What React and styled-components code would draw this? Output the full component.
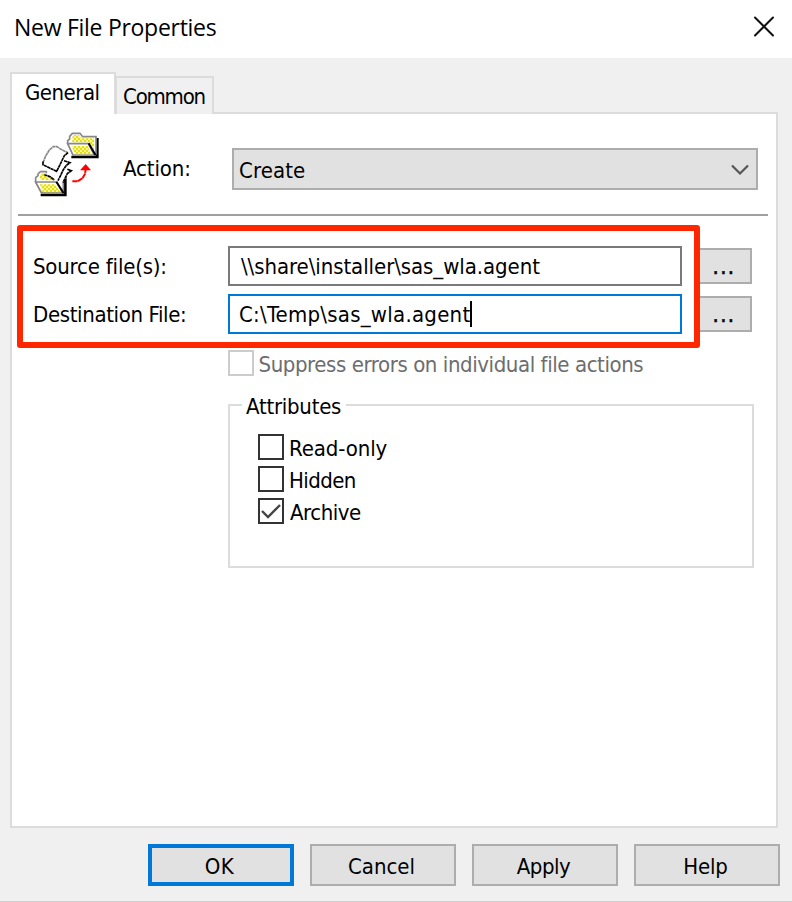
import React from 'react';
import styled, { createGlobalStyle } from 'styled-components';

const GlobalStyle = createGlobalStyle`
  *, *::before, *::after { box-sizing: border-box; }
  body { margin: 0; background: #fff; }
`;

const Dialog = styled.main`
  width: 792px;
  height: 902px;
  display: flex;
  flex-direction: column;
  overflow: hidden;
  background: #f0f0f0;
  border-bottom: 1px solid #cfcfcf;
  color: #000;
  font: 22px/26px "DejaVu Sans Condensed", "DejaVu Sans", sans-serif;
  font-stretch: condensed;
`;

const TitleBar = styled.header`
  height: 58px;
  flex: none;
  display: flex;
  justify-content: space-between;
  align-items: flex-start;
  padding: 0 17px 0 14px;
  background: #fff;
`;

const Title = styled.h1`
  margin: 0;
  font: 400 23px/54px "Open Sans", "Noto Sans", sans-serif;
  letter-spacing: -0.28px;
`;

const CloseButton = styled.button`
  display: flex;
  margin: 15px 0 0;
  padding: 0;
  border: 0;
  background: none;
`;

const Text = styled.span`
  display: block;
  white-space: pre;
  letter-spacing: ${p => p.$track || 0}px;
  transform: translateY(${p => p.$drop || 0}px);
`;

const TabList = styled.nav`
  height: 56px;
  flex: none;
  display: flex;
  align-items: flex-end;
  padding-left: 10px;
`;

const Tab = styled.div`
  width: ${p => p.$width}px;
  height: ${p => (p.$active ? 42 : 38)}px;
  margin-left: ${p => (p.$active ? 0 : -1)}px;
  padding: ${p => (p.$active ? '6px 0 0 13px' : '6px 0 0 6px')};
  position: relative;
  z-index: ${p => (p.$active ? 1 : 0)};
  border: 2px solid #dcdcdc;
  border-bottom: 0;
  background: ${p => (p.$active ? '#fff' : '#f0f0f0')};
`;

const Panel = styled.section`
  width: 768px;
  height: 716px;
  flex: none;
  margin: -2px 0 0 10px;
  border: 2px solid #dcdcdc;
  background: #fff;
`;

const ActionRow = styled.div`
  height: 102px;
  display: grid;
  grid-template-columns: 90px 109px 526px;
  align-items: start;
  margin: 0 8px 0 6px;
  padding: 16px 0 0 15px;
  border-bottom: 2px solid #a0a0a0;
`;

const ActionLabel = styled.label`
  padding-top: 8px;
`;

const Combo = styled.div`
  width: 526px;
  height: 42px;
  display: flex;
  align-items: center;
  justify-content: space-between;
  margin-top: 18px;
  padding: 0 6px 0 5px;
  border: 2px solid #adadad;
  background: #e1e1e1;
`;

const FileArea = styled.div`
  position: relative;
  height: 120px;
  display: grid;
  grid-template-columns: 195px 454px auto;
  grid-template-rows: 40px 40px;
  row-gap: 8px;
  align-items: center;
  padding: 30px 24px 0 21px;
`;

const Field = styled.div`
  height: 40px;
  display: flex;
  align-items: center;
  padding-left: ${p => p.$pad}px;
  border: 2px solid ${p => (p.$focused ? '#0078d7' : '#7a7a7a')};
  background: #fff;
`;

const Caret = styled.span`
  width: 2px;
  height: 26px;
  background: #000;
`;

const BrowseButton = styled.button`
  width: 58px;
  height: 36px;
  justify-self: end;
  display: flex;
  align-items: center;
  justify-content: center;
  padding: 1px 0 0 2px;
  border: 2px solid #adadad;
  background: #e1e1e1;
  color: #000;
  font: inherit;
  -webkit-text-stroke: 0.5px #000;
`;

const Highlight = styled.div`
  position: absolute;
  left: 5px;
  top: 9px;
  width: 683px;
  height: 123px;
  border: 6px solid #ff2600;
  border-radius: 3px;
  pointer-events: none;
`;

const Options = styled.div`
  padding: 14px 0 0 216px;
`;

const CheckRow = styled.label`
  height: 26px;
  display: flex;
  align-items: center;
  gap: ${p => p.$gap}px;
  color: ${p => (p.$disabled ? '#6d6d6d' : '#000')};
`;

const Box = styled.span`
  width: 26px;
  height: 26px;
  display: flex;
  align-items: center;
  justify-content: center;
  border: 2px solid ${p => (p.$disabled ? '#cccccc' : '#333')};
  background: #fff;
`;

const Group = styled.fieldset`
  width: 526px;
  height: 176px;
  margin: 16px 0 0;
  padding: 16px 0 0 28px;
  border: 2px solid #dcdcdc;
  min-width: 0;
`;

const Legend = styled.legend`
  margin-left: -16px;
  padding: 0 5px 0 4px;
`;

const CheckList = styled.div`
  display: flex;
  flex-direction: column;
  gap: 6px;
`;

const Footer = styled.footer`
  display: flex;
  gap: 16px;
  padding: 16px 0 0 148px;
`;

const PushButton = styled.button`
  width: 146px;
  height: 42px;
  display: flex;
  align-items: center;
  justify-content: center;
  padding: 3px 3px 0 0;
  border: ${p => (p.$primary ? '4px solid #0078d7' : '2px solid #adadad')};
  background: #e1e1e1;
  color: #000;
  font: inherit;
`;

const IconSvg = styled.svg`
  display: block;
`;

const FilesIcon = () => (
  <IconSvg width="67" height="68" viewBox="99 30 201 204" fill="none" strokeWidth="5">
    <defs>
      <pattern id="dither" width="12" height="12" patternUnits="userSpaceOnUse">
        <rect width="12" height="12" fill="#f8f4a4" />
        <rect width="6" height="6" fill="#e6e000" />
        <rect x="6" y="6" width="6" height="6" fill="#e6e000" />
      </pattern>
    </defs>
    <path d="M292 54V111H214" stroke="#000" strokeWidth="8" />
    <path d="M203 70V62L209 57V49L217 40H240L248 50H288V102H218Z" fill="#fff" stroke="#888" />
    <path d="M217 67V51L222 45H237L244 55H282V90L268 67Z" fill="url(#dither)" />
    <path d="M203 71H265L283 105H219Z" fill="#fff" stroke="#888" />
    <path d="M215 78H262L275 103H225Z" fill="url(#dither)" />
    <path d="M266 70L287 106" stroke="#000" strokeWidth="6" />

    <path d="M196 169V225H122" stroke="#000" strokeWidth="8" />
    <path d="M107 186V173L114 167V162L121 155H139L145 164H190V218H125Z" fill="#fff" stroke="#888" />
    <path d="M120 180V166L125 160H136L143 169H158V181Z" fill="url(#dither)" />
    <path d="M150 164L182 116L214 152L190 185L178 192Z" fill="#fff" />
    <path d="M202 148L214 152L202 161L196 173L189 188" stroke="#000" strokeDasharray="10 1" />
    <path d="M187 119L210 128L198 136L190 150L179 171L166 178L136 168L148 145Z" fill="#fff" />
    <path d="M192 122L210 128L199 136L190 149L182 166L174 182M133 164L150 170L163 180" stroke="#000" strokeDasharray="10 1" />
    <path d="M129 134L137 108L148 90L160 80H171L183 88L204 98L194 106L182 132L170 154L151 145Z" fill="#fff" />
    <path d="M129 128L137 108L148 90L160 80H171L183 88L204 98" stroke="#888" strokeDasharray="10 1" />
    <path d="M204 98L193 107L181 132L170 154L151 145L129 134V124" stroke="#000" strokeDasharray="10 1" />
    <path d="M107 186H170L188 218H124Z" fill="#fff" stroke="#888" />
    <path d="M119 193H165L182 217H129Z" fill="url(#dither)" />
    <path d="M169 185L191 220" stroke="#000" strokeWidth="6" />

    <path d="M217 184H233L247 175L255 162L257 147" stroke="#f00" strokeWidth="6" strokeDasharray="16 1" />
    <path d="M257 132L273 151H240Z" fill="#f00" />
  </IconSvg>
);

export default function App() {
  return (
    <>
      <GlobalStyle />
      <Dialog>
        <TitleBar>
          <Title>New File Properties</Title>
          <CloseButton aria-label="Close">
            <IconSvg width="22" height="22" viewBox="0 0 22 22" stroke="#111" strokeWidth="2" strokeLinecap="round">
              <path d="M2 2.5L20 20.5M20 2.5L2 20.5" />
            </IconSvg>
          </CloseButton>
        </TitleBar>

        <TabList>
          <Tab $active $width={106}><Text $track={-0.5}>General</Text></Tab>
          <Tab $width={99}><Text $track={-1.2}>Common</Text></Tab>
        </TabList>

        <Panel>
          <ActionRow>
            <FilesIcon />
            <ActionLabel><Text $track={-0.13} $drop={18}>Action:</Text></ActionLabel>
            <Combo>
              <Text $track={0.1} $drop={2}>Create</Text>
              <IconSvg width="20" height="14" viewBox="0 0 20 14" fill="none" stroke="#555" strokeWidth="2.2">
                <path d="M2 3.5L10 11.5L18 3.5" />
              </IconSvg>
            </Combo>
          </ActionRow>

          <FileArea>
            <Text $track={-0.2} $drop={1}>Source file(s):</Text>
            <Field $pad={11}><Text $track={-0.07} $drop={1}>{'\\\\share\\installer\\sas_wla.agent'}</Text></Field>
            <BrowseButton><Text $track={1.3}>...</Text></BrowseButton>
            <Text $track={-0.36} $drop={1}>Destination File:</Text>
            <Field $focused $pad={9}>
              <Text $track={0.25} $drop={1}>{'C:\\Temp\\sas_wla.agent'}</Text>
              <Caret />
            </Field>
            <BrowseButton><Text $track={1.3}>...</Text></BrowseButton>
            <Highlight />
          </FileArea>

          <Options>
            <CheckRow $disabled $gap={4.5}>
              <Box $disabled />
              <Text $track={-0.42} $drop={2}>Suppress errors on individual file actions</Text>
            </CheckRow>
            <Group>
              <Legend><Text $track={-0.25} $drop={2}>Attributes</Text></Legend>
              <CheckList>
                <CheckRow $gap={5}><Box /><Text $track={-0.1} $drop={2}>Read-only</Text></CheckRow>
                <CheckRow $gap={5}><Box /><Text $track={-0.6} $drop={2}>Hidden</Text></CheckRow>
                <CheckRow $gap={6}>
                  <Box>
                    <IconSvg width="22" height="22" viewBox="0 0 22 22" fill="none" stroke="#444" strokeWidth="2.4">
                      <path d="M2 11L8 17L20 5" />
                    </IconSvg>
                  </Box>
                  <Text $track={-0.47} $drop={2}>Archive</Text>
                </CheckRow>
              </CheckList>
            </Group>
          </Options>
        </Panel>

        <Footer>
          <PushButton $primary><Text $track={0.4}>OK</Text></PushButton>
          <PushButton><Text>Cancel</Text></PushButton>
          <PushButton><Text $track={-0.5}>Apply</Text></PushButton>
          <PushButton><Text $track={-0.2}>Help</Text></PushButton>
        </Footer>
      </Dialog>
    </>
  );
}
